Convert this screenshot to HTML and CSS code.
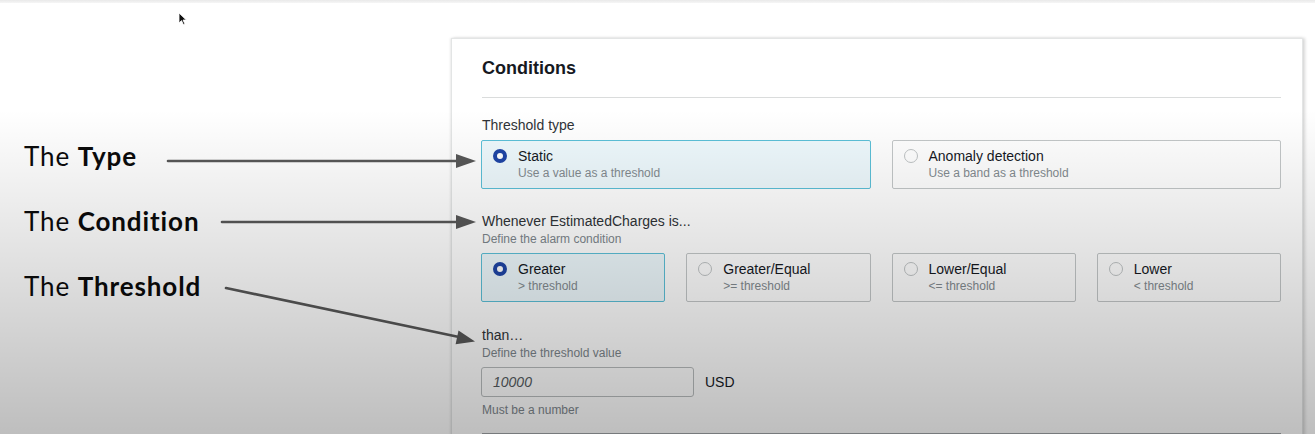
FILE: index.html
```html
<!DOCTYPE html>
<html>
<head>
<meta charset="utf-8">
<link rel="stylesheet" href="styles.css">
</head>
<body>
<div class="screen">
  <div class="topstrip"></div>
  <div class="stage">
    <div class="notes">
      <div class="note">The <b>Type</b></div>
      <div class="note">The <b>Condition</b></div>
      <div class="note">The <b>Threshold</b></div>
    </div>
    <section class="panel">
      <h2 class="title">Conditions</h2>
      <div class="field-label">Threshold type</div>
      <div class="tiles two">
        <div class="tile selected">
          <span class="radio on"></span>
          <div class="tile-text"><div class="tile-label">Static</div><div class="tile-desc">Use a value as a threshold</div></div>
        </div>
        <div class="tile">
          <span class="radio"></span>
          <div class="tile-text"><div class="tile-label">Anomaly detection</div><div class="tile-desc">Use a band as a threshold</div></div>
        </div>
      </div>
      <div class="field-label gap-top">Whenever EstimatedCharges is...</div>
      <div class="field-desc">Define the alarm condition</div>
      <div class="tiles four">
        <div class="tile selected">
          <span class="radio on"></span>
          <div class="tile-text"><div class="tile-label">Greater</div><div class="tile-desc">&gt; threshold</div></div>
        </div>
        <div class="tile">
          <span class="radio"></span>
          <div class="tile-text"><div class="tile-label">Greater/Equal</div><div class="tile-desc">&gt;= threshold</div></div>
        </div>
        <div class="tile">
          <span class="radio"></span>
          <div class="tile-text"><div class="tile-label">Lower/Equal</div><div class="tile-desc">&lt;= threshold</div></div>
        </div>
        <div class="tile">
          <span class="radio"></span>
          <div class="tile-text"><div class="tile-label">Lower</div><div class="tile-desc">&lt; threshold</div></div>
        </div>
      </div>
      <div class="field-label gap-top2">than…</div>
      <div class="field-desc">Define the threshold value</div>
      <div class="input-row">
        <div class="input"><span class="placeholder">10000</span></div>
        <span class="unit">USD</span>
      </div>
      <div class="field-desc hint">Must be a number</div>
      <div class="bottom-rule"></div>
    </section>
  </div>
  <svg class="arrows" width="1315" height="434" viewBox="0 0 1315 434">
    <g stroke="#585858" stroke-width="2.6" fill="none" stroke-linecap="round">
      <line x1="168" y1="161" x2="460" y2="161"/>
      <line x1="222" y1="222" x2="460" y2="222"/>
      <line x1="226" y1="288" x2="459" y2="337"/>
    </g>
    <g fill="#585858">
      <polygon points="456,154 476,161 456,168"/>
      <polygon points="456,215 476,222 456,229"/>
      <polygon points="458.5,330.5 475,341.5 455.6,344.2"/>
    </g>
  </svg>
  <svg class="cursor" width="10" height="14" viewBox="0 0 10 14">
    <path d="M1 1 L1 11 L3.5 8.6 L5.4 12.6 L6.9 11.9 L5 8 L8.3 8 Z" fill="#111" stroke="#fff" stroke-width="0.8"/>
  </svg>
  <div class="shade"></div>
</div>
</body>
</html>
```
FILE: styles.css
```css
* { box-sizing: border-box; }
html, body { margin: 0; padding: 0; }
body {
  background: #ffffff;
  font-family: "Liberation Sans", Arial, sans-serif;
  color: #16191f;
}
.screen {
  position: relative;
  width: 1315px;
  height: 434px;
  overflow: hidden;
  background: #ffffff;
}
.topstrip {
  height: 3px;
  background: linear-gradient(to bottom, #e9e9e9, #f6f6f6);
}
.stage {
  display: flex;
  align-items: flex-start;
}
.notes {
  flex: 0 0 451px;
  display: flex;
  flex-direction: column;
  gap: 35px;
  padding: 138px 0 0 24px;
}
.note {
  font-family: Lato, "Open Sans", sans-serif;
  font-size: 26px;
  line-height: 30px;
  color: #0b0b0b;
  letter-spacing: 0.9px;
}
.note b { font-weight: 700; }
.panel {
  flex: 0 0 852px;
  margin-top: 35px;
  height: 420px;
  background: #ffffff;
  border: 1px solid #e3e5e5;
  border-bottom: none;
  box-shadow: 2px 0 3px rgba(0, 0, 0, 0.16), -1px 0 2px rgba(0, 0, 0, 0.08);
  padding: 17px 21px 0 30px;
}
.title {
  margin: 0;
  font-size: 18px;
  line-height: 24px;
  font-weight: 700;
  color: #16191f;
  padding-bottom: 17px;
  border-bottom: 1px solid #dadcdc;
}
.field-label {
  margin-top: 17px;
  font-size: 14px;
  line-height: 20px;
  color: #2f3337;
}
.field-label.gap-top { margin-top: 22px; }
.field-label.gap-top2 { margin-top: 23px; }
.field-desc {
  font-size: 12px;
  line-height: 16px;
  color: #7d868c;
}
.tiles {
  display: grid;
  gap: 21px;
  margin-top: 5px;
  margin-left: -1px;
}
.tiles.two { grid-template-columns: 1fr 1fr; }
.tiles.four { grid-template-columns: repeat(4, 1fr); margin-top: 6px; }
.tile {
  display: flex;
  align-items: flex-start;
  gap: 11px;
  height: 49px;
  padding: 6px 12px 0 11px;
  border: 1px solid #c3c7c8;
  border-radius: 2px;
  background: #ffffff;
}
.tile.selected {
  border-color: #5cc0d8;
  background: #eef9fd;
}
.radio {
  flex: 0 0 14px;
  width: 14px;
  height: 14px;
  margin-top: 2px;
  border-radius: 50%;
  border: 1px solid #c0c4c5;
  background: #ffffff;
}
.radio.on {
  border: 4px solid #1f45a6;
}
.tile-label {
  font-size: 14px;
  line-height: 18px;
  color: #16191f;
}
.tile-desc {
  font-size: 12px;
  line-height: 16px;
  color: #838b90;
}
.input-row {
  display: flex;
  align-items: center;
  gap: 11px;
  margin-top: 6px;
  margin-left: -1px;
}
.input {
  width: 213px;
  height: 30px;
  border: 1px solid #b9bdbe;
  border-radius: 3px;
  background: #ffffff;
  padding-left: 11px;
  display: flex;
  align-items: center;
}
.placeholder {
  font-size: 14px;
  font-style: italic;
  color: #545b60;
}
.unit {
  font-size: 14px;
  color: #16191f;
}
.hint { margin-top: 5px; }
.bottom-rule {
  margin-top: 15px;
  border-top: 2px solid #9fa4a6;
}
.arrows {
  position: absolute;
  left: 0;
  top: 0;
}
.cursor {
  position: absolute;
  left: 178px;
  top: 12px;
}
.shade {
  position: absolute;
  inset: 0;
  pointer-events: none;
  background: linear-gradient(to bottom, rgba(0, 0, 0, 0) 110px, rgba(0, 0, 0, 0.255) 434px);
}
```
